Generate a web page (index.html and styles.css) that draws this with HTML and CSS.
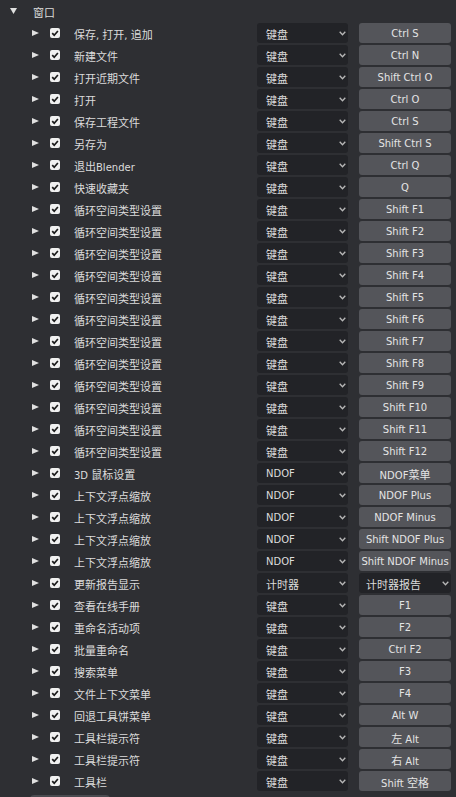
FILE: index.html
```html
<!DOCTYPE html>
<html lang="zh">
<head>
<meta charset="utf-8">
<link rel="stylesheet" href="styles.css">
</head>
<body>
<div class="panel">
  <div class="header">
    <svg class="tri-down" width="7" height="6" viewBox="0 0 7 6"><polygon points="0,0 7,0 3.5,6" fill="#e0e0e0"/></svg>
    <span class="htext"><span class="cjk">窗口</span></span>
  </div>
  <div class="list" id="list"></div>
  <div class="addbar"></div>
</div>
<script>
var rows = [
 ["保存, 打开, 追加","键盘","Ctrl S"],
 ["新建文件","键盘","Ctrl N"],
 ["打开近期文件","键盘","Shift Ctrl O"],
 ["打开","键盘","Ctrl O"],
 ["保存工程文件","键盘","Ctrl S"],
 ["另存为","键盘","Shift Ctrl S"],
 ["退出Blender","键盘","Ctrl Q"],
 ["快速收藏夹","键盘","Q"]
];
for (var i=1;i<=12;i++) rows.push(["循环空间类型设置","键盘","Shift F"+i]);
rows.push(["3D 鼠标设置","NDOF","NDOF菜单"]);
rows.push(["上下文浮点缩放","NDOF","NDOF Plus"]);
rows.push(["上下文浮点缩放","NDOF","NDOF Minus"]);
rows.push(["上下文浮点缩放","NDOF","Shift NDOF Plus"]);
rows.push(["上下文浮点缩放","NDOF","Shift NDOF Minus"]);
rows.push(["更新报告显示","计时器","计时器报告","menu"]);
rows.push(["查看在线手册","键盘","F1"]);
rows.push(["重命名活动项","键盘","F2"]);
rows.push(["批量重命名","键盘","Ctrl F2"]);
rows.push(["搜索菜单","键盘","F3"]);
rows.push(["文件上下文菜单","键盘","F4"]);
rows.push(["回退工具饼菜单","键盘","Alt W"]);
rows.push(["工具栏提示符","键盘","左 Alt"]);
rows.push(["工具栏提示符","键盘","右 Alt"]);
rows.push(["工具栏","键盘","Shift 空格"]);
function t(s){ return s.replace(/([\u3000-\u9fff\uff00-\uffef]+)/g,'<span class="cjk">$1</span>'); }
var chev = '<svg class="chev" width="7" height="5" viewBox="0 0 7 5"><polyline points="0.7,0.8 3.5,3.8 6.3,0.8" fill="none" stroke="#b8b8b8" stroke-width="1.3"/></svg>';
var html = "";
rows.forEach(function(r){
  html += '<div class="row">' +
    '<svg class="tri" width="7" height="6" viewBox="0 0 7 6"><polygon points="0,0 7,3 0,6" fill="#e0e0e0"/></svg>' +
    '<span class="chk"><svg width="10" height="10" viewBox="0 0 10 10"><polyline points="2.2,5.2 4.2,7.2 7.9,3" fill="none" stroke="#1a1a1a" stroke-width="1.7"/></svg></span>' +
    '<span class="label">' + t(r[0]) + '</span>' +
    '<span class="select"><span class="stext">' + t(r[1]) + '</span>' + chev + '</span>' +
    (r[3] ? '<span class="select menu"><span class="stext">' + t(r[2]) + '</span>' + chev + '</span>'
          : '<span class="key"><span class="ktext">' + t(r[2]) + '</span></span>') +
    '</div>';
});
document.getElementById("list").innerHTML = html;
</script>
</body>
</html>
```

FILE: styles.css
```css
html, body {
  margin: 0;
  padding: 0;
  background: #2e2f33;
}
body {
  width: 456px;
  height: 797px;
  overflow: hidden;
  font-family: "DejaVu Sans", "Noto Sans CJK SC", sans-serif;
  font-size: 10px;
  color: #dcdcdc;
}
.cjk {
  font-family: "Noto Sans CJK SC", sans-serif;
  font-size: 11px;
}
.panel {
  padding-top: 1px;
}
.header {
  height: 20px;
  display: flex;
  align-items: center;
  padding-left: 10px;
}
.tri-down {
  display: block;
  margin-right: 16px;
}
.htext {
  color: #dcdcdc;
  padding-top: 1px;
}
.list {
  margin-top: 2px;
  display: flex;
  flex-direction: column;
  gap: 2px;
}
.row {
  height: 20px;
  display: flex;
  align-items: center;
  padding-left: 32px;
  padding-right: 5px;
}
.tri {
  display: block;
  flex: none;
  margin-right: 11px;
}
.chk {
  flex: none;
  width: 10px;
  height: 10px;
  background: #f0f0f0;
  border-radius: 2px;
  margin-right: 14px;
  display: flex;
}
.chk svg {
  display: block;
}
.label {
  flex: 1;
  white-space: nowrap;
  overflow: hidden;
  padding-top: 1px;
}
.select {
  flex: none;
  width: 91px;
  height: 20px;
  box-sizing: border-box;
  background: #222327;
  border-radius: 3px;
  display: flex;
  align-items: center;
  padding-left: 9px;
  padding-right: 2px;
}
.select .stext {
  flex: 1;
  white-space: nowrap;
  padding-top: 1px;
}
.chev {
  display: block;
  flex: none;
}
.select.menu {
  width: 92px;
  margin-left: 11px;
  padding-left: 7px;
}
.key {
  flex: none;
  width: 92px;
  height: 20px;
  box-sizing: border-box;
  padding-top: 1px;
  margin-left: 11px;
  background: #54555a;
  border-radius: 3px;
  display: flex;
  align-items: center;
  justify-content: center;
  color: #e4e4e4;
}
.ktext {
  white-space: pre;
}
.addbar {
  margin-top: 4px;
  margin-left: 30px;
  width: 80px;
  height: 16px;
  background: #4a4b50;
  border-radius: 4px;
}
```
